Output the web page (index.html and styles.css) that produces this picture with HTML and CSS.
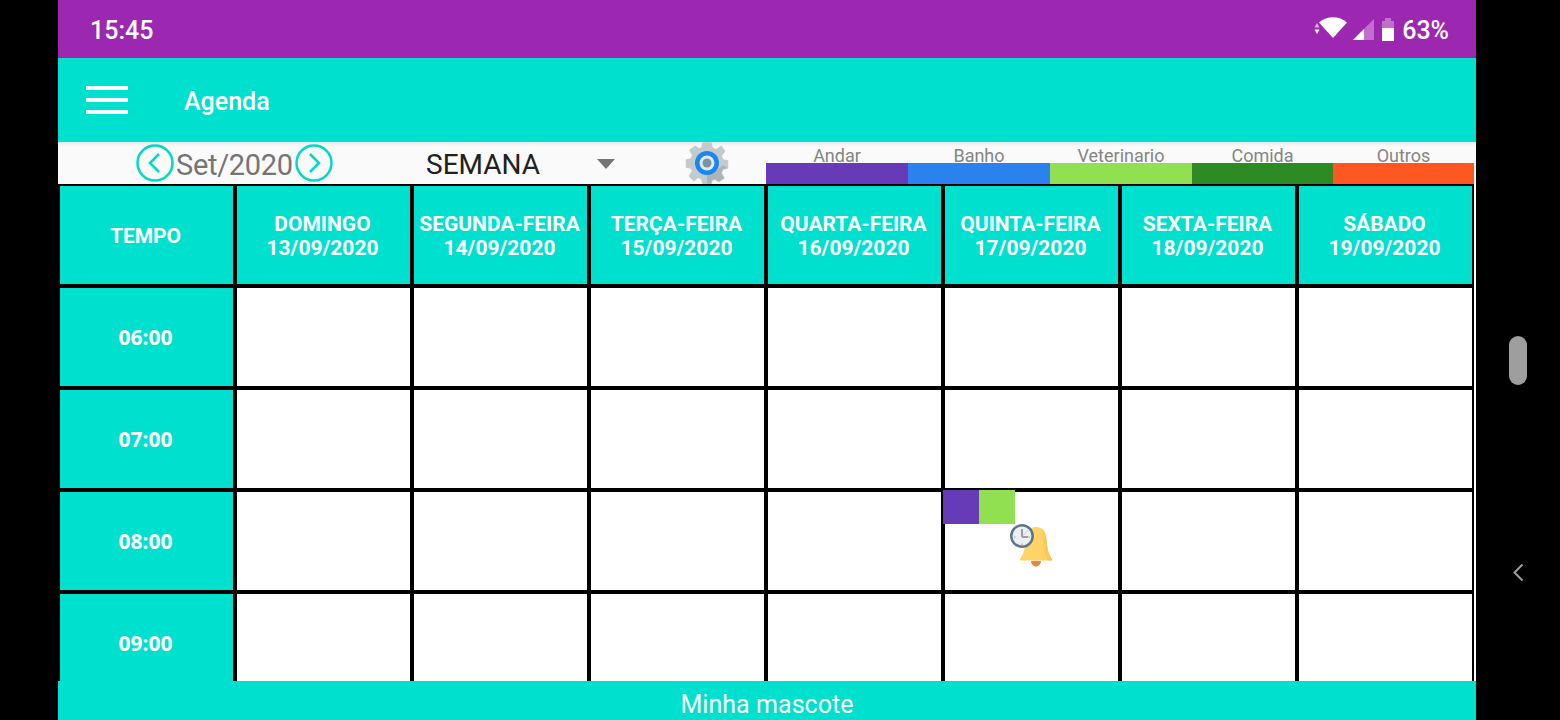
FILE: index.html
```html
<!DOCTYPE html>
<html lang="en">
<head>
<meta charset="UTF-8">
<meta name="viewport" content="width=device-width, initial-scale=1.0">
<title>Agenda</title>
<link rel="stylesheet" href="styles.css">
</head>
<body>
<div class="screen">
    <div class="status-bar">
        <span class="clock">15:45</span>
        <div class="status-icons">
            <svg class="ic-arrows" width="6" height="14" viewBox="0 0 6 14"><path d="M3 1 5.500 5.500H.5Z" fill="#d9b3e3"/><path d="M.5 7.500H5.500L3 12Z" fill="#fff"/></svg>
            <svg class="ic-wifi" width="28" height="22" viewBox="0 0 28 22"><path d="M0 5.500C8-1.500 20-1.500 28 5.500L14 21Z" fill="#fff"/></svg>
            <svg class="ic-signal" width="21" height="21" viewBox="0 0 21 21"><path d="M0 21 21 0V21Z" fill="#c06fcd"/><path d="M0 21 11 10V21Z" fill="#fff"/></svg>
            <svg class="ic-battery" width="12" height="23" viewBox="0 0 12 23"><path d="M3 0H9V3H12V10H0V3H3Z" fill="#c06fcd"/><path d="M0 10H12V23H0Z" fill="#fff"/></svg>
            <span class="battery-text">63%</span>
        </div>
    </div>

    <div class="app-bar">
        <div class="menu-btn"><span></span><span></span><span></span></div>
        <span class="app-title">Agenda</span>
    </div>

    <div class="toolbar">
        <div class="month-nav">
            <svg width="38" height="38" viewBox="0 0 38 38"><circle cx="19" cy="19" r="17.500" fill="none" stroke="#00d8c9" stroke-width="2.500"/><path d="M23 10 14 19 23 28" fill="none" stroke="#00d8c9" stroke-width="2.500"/></svg>
            <span class="month-text">Set/2020</span>
            <svg width="38" height="38" viewBox="0 0 38 38"><circle cx="19" cy="19" r="17.500" fill="none" stroke="#00d8c9" stroke-width="2.500"/><path d="M15 10 24 19 15 28" fill="none" stroke="#00d8c9" stroke-width="2.500"/></svg>
        </div>
        <div class="view-select">
            <span class="view-text">SEMANA</span>
            <span class="caret"></span>
        </div>
        <svg class="gear" width="44" height="44" viewBox="0 0 44 44">
            <path d="M18 2H26L27 7 31 9 36 5.500 39.500 10 36 15 38 19 42.500 20V27L38 28 36 32 39 37 34 40.500 30 38 27 39 26 42.500H18L17 38 13 36 9 39.500 4.500 35 8 30 6 27 1.500 26V19L6 18 8 14 5 9 10 5.500 14 8 17 7Z" fill="#c2cbce" stroke="#c2cbce" stroke-width="1.500" stroke-linejoin="round"/>
            <path d="M30 31 38 24 42.500 27 38 28 36 32 39 37 34 40.500 30 38 27 39 26 42.500H22V34Z" fill="#aab5b9"/>
            <circle cx="22" cy="22" r="12" fill="#1a86f0"/>
            <circle cx="22" cy="22" r="7.500" fill="#dfeaf0"/>
            <circle cx="22" cy="22" r="4.500" fill="#7d929d"/>
        </svg>
        <div class="legend">
            <div class="legend-item"><span>Andar</span><div class="swatch purple"></div></div>
            <div class="legend-item"><span>Banho</span><div class="swatch blue"></div></div>
            <div class="legend-item"><span>Veterinario</span><div class="swatch lime"></div></div>
            <div class="legend-item"><span>Comida</span><div class="swatch green"></div></div>
            <div class="legend-item"><span>Outros</span><div class="swatch orange"></div></div>
        </div>
    </div>

    <div class="table-wrap">
        <div class="week-table">
            <div class="cell head">TEMPO</div>
            <div class="cell head">DOMINGO<br>13/09/2020</div>
            <div class="cell head">SEGUNDA-FEIRA<br>14/09/2020</div>
            <div class="cell head">TERÇA-FEIRA<br>15/09/2020</div>
            <div class="cell head">QUARTA-FEIRA<br>16/09/2020</div>
            <div class="cell head">QUINTA-FEIRA<br>17/09/2020</div>
            <div class="cell head">SEXTA-FEIRA<br>18/09/2020</div>
            <div class="cell head">SÁBADO<br>19/09/2020</div>

            <div class="cell hour">06:00</div>
            <div class="cell"></div><div class="cell"></div><div class="cell"></div><div class="cell"></div><div class="cell"></div><div class="cell"></div><div class="cell"></div>

            <div class="cell hour">07:00</div>
            <div class="cell"></div><div class="cell"></div><div class="cell"></div><div class="cell"></div><div class="cell"></div><div class="cell"></div><div class="cell"></div>

            <div class="cell hour">08:00</div>
            <div class="cell"></div><div class="cell"></div><div class="cell"></div><div class="cell"></div>
            <div class="cell">
                <div class="event-tags"><div class="tag purple"></div><div class="tag lime"></div></div>
                <svg class="event-alarm" width="48" height="48" viewBox="0 0 48 48">
                    <path d="M21 37H31C31 40 28.500 42.500 26 42.500 23.500 42.500 21 40 21 37Z" fill="#e08b3e"/>
                    <path d="M26 3C33 3 36 8 36.500 16 37 25 39 31 42 35 42.500 36 42 36.500 41 36.500H11C10 36.500 9.500 36 10 35 13 31 15.500 25 15.500 16 16 8 19 3 26 3Z" fill="#ffd466"/>
                    <path d="M31 4.500C35 7 36 11 36.500 16 37 25 39 31 42 35 42.500 36 42 36.500 41 36.500H38C35 31 33.500 25 33 16 33 11 33 7 31 4.500Z" fill="#fcc85a"/>
                    <circle cx="12" cy="12" r="10.700" fill="#e9eff3" stroke="#5d7688" stroke-width="2.500"/>
                    <path d="M12 5V13H18" fill="none" stroke="#3f5566" stroke-width="1"/>
                    <path d="M12 13 18 6" fill="none" stroke="#f2b8b8" stroke-width=".7"/>
                    <path d="M4 13H5.500M18.500 13H20M12 19.500V21" fill="none" stroke="#ef7f7f" stroke-width="1"/>
                </svg>
            </div>
            <div class="cell"></div><div class="cell"></div>

            <div class="cell hour">09:00</div>
            <div class="cell"></div><div class="cell"></div><div class="cell"></div><div class="cell"></div><div class="cell"></div><div class="cell"></div><div class="cell"></div>
        </div>
    </div>

    <div class="footer-bar">Minha mascote</div>
</div>

<div class="side-nav">
    <div class="pill"></div>
    <svg class="back" width="12" height="19" viewBox="0 0 12 19"><path d="M10.500 1.500 2.500 9.500 10.500 17.500" fill="none" stroke="#9e9e9e" stroke-width="2"/></svg>
</div>
</body>
</html>
```

FILE: styles.css
```css
* {
    box-sizing: border-box;
}
body {
    margin: 0;
    width: 1560px;
    height: 720px;
    overflow: hidden;
    background-color: #000;
    font-family: Roboto, sans-serif;
    display: flex;
    padding-left: 58px;
}
.screen {
    width: 1418px;
    height: 720px;
    display: flex;
    flex-direction: column;
    background-color: #fff;
}

/* status bar */
.status-bar {
    height: 58px;
    flex: none;
    background-color: #9c27b0;
    color: #fff;
    display: flex;
    align-items: center;
    justify-content: space-between;
    padding: 3px 27px 0 32px;
}
.clock {
    font-size: 25px;
    font-weight: 500;
}
.status-icons {
    display: flex;
    align-items: center;
}
.ic-arrows {
    margin: 0 -1px 4px 0;
}
.ic-wifi {
    margin: 0 0 5px 0;
}
.ic-signal {
    margin: 0 0 2px 6px;
}
.ic-battery {
    margin: 0 0 2px 8px;
}
.battery-text {
    margin-left: 8px;
    font-size: 25px;
    font-weight: 500;
}

/* app bar */
.app-bar {
    height: 84px;
    flex: none;
    background-color: #00e0cf;
    display: flex;
    align-items: center;
    padding-left: 28px;
    color: #fff;
}
.menu-btn {
    width: 42px;
    display: flex;
    flex-direction: column;
    gap: 8px;
}
.menu-btn span {
    height: 4px;
    background-color: #fff;
}
.app-title {
    margin: 3px 0 0 56px;
    font-size: 25px;
    font-weight: 500;
}

/* month, view and legend */
.toolbar {
    height: 42px;
    flex: none;
    position: relative;
    display: flex;
    background-color: #fafafa;
    box-shadow: inset 0 5px 4px -3px rgba(0, 0, 0, .07);
}
.month-nav {
    width: 276px;
    padding-left: 78px;
    display: flex;
    align-items: center;
    flex: none;
}
.month-text {
    font-size: 29px;
    color: #757575;
    margin: 3px 2px 0 2px;
    letter-spacing: -.3px;
}
.view-select {
    width: 224px;
    flex: none;
    padding: 0 0 0 92px;
    display: flex;
    align-items: center;
}
.view-text {
    font-size: 28px;
    margin-top: 3px;
    color: #212121;
}
.caret {
    margin: 2px 0 0 57px;
    border-left: 9px solid transparent;
    border-right: 9px solid transparent;
    border-top: 10px solid #757575;
}
.gear {
    position: absolute;
    left: 627px;
    top: -1px;
}
.legend {
    position: absolute;
    left: 708px;
    top: 0;
    width: 708px;
    height: 42px;
    display: grid;
    grid-template-columns: 142px 142px 142px 141px 141px;
}
.legend-item {
    display: flex;
    flex-direction: column;
    justify-content: flex-end;
    text-align: center;
    font-size: 18px;
    color: #858585;
}
.legend-item span {
    line-height: 16px;
    height: 15px;
}
.swatch {
    height: 21px;
    flex: none;
}
.purple { background-color: #673ab7; }
.blue { background-color: #2a82ee; }
.lime { background-color: #90e052; }
.green { background-color: #2e8b24; }
.orange { background-color: #ff5722; }

/* week table */
.table-wrap {
    flex: 1;
    min-height: 0;
    overflow: hidden;
}
.week-table {
    display: grid;
    grid-template-columns: repeat(8, 177px);
    grid-auto-rows: 102px;
}
.cell {
    border: 2px solid #000;
    background-color: #fff;
    position: relative;
}
.head, .hour {
    background-color: #00e0cf;
    color: #fff;
    display: flex;
    align-items: center;
    justify-content: center;
    text-align: center;
    font-weight: 700;
    padding-right: 2px;
}
.head {
    font-size: 21px;
    line-height: 24px;
    padding-top: 1px;
}
.hour {
    font-family: "Open Sans", sans-serif;
    font-size: 21px;
}
.event-tags {
    position: absolute;
    left: -2px;
    top: -2px;
    display: flex;
}
.tag {
    width: 36px;
    height: 34px;
}
.event-alarm {
    position: absolute;
    left: 65px;
    top: 32px;
}

.footer-bar {
    height: 39px;
    flex: none;
    background-color: #00e0cf;
    color: #fff;
    font-size: 25px;
    letter-spacing: .05px;
    text-align: center;
    padding-top: 8px;
    line-height: 32px;
}

/* black strip beside the screen */
.side-nav {
    width: 84px;
    display: flex;
    flex-direction: column;
    align-items: center;
    padding: 336px 0 0 0;
}
.pill {
    width: 18px;
    height: 49px;
    border-radius: 9px;
    background-color: #9e9e9e;
}
.back {
    margin-top: 178px;
}
```
